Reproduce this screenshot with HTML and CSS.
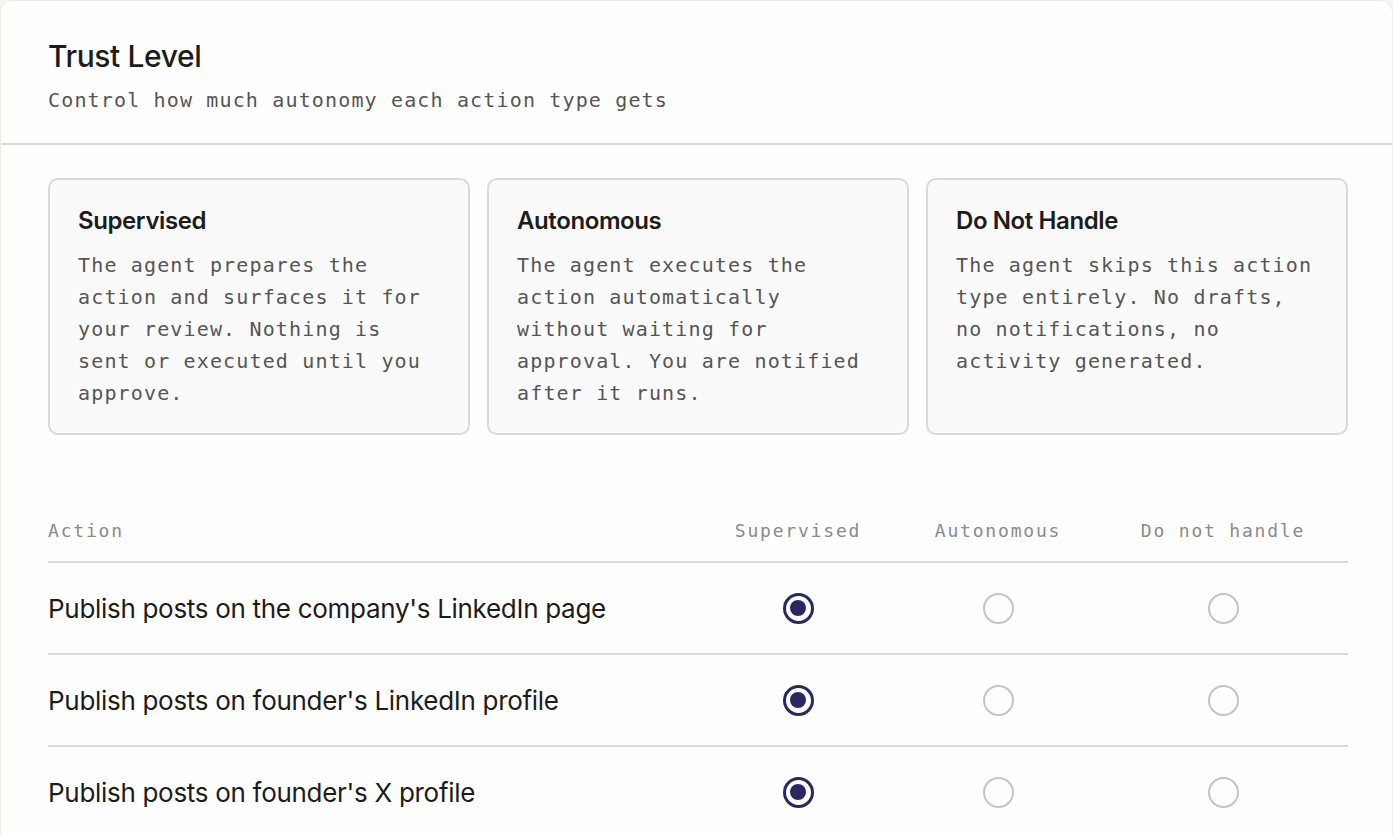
FILE: index.html
```html
<!DOCTYPE html>
<html lang="en">
<head>
    <meta charset="UTF-8">
    <meta name="viewport" content="width=device-width, initial-scale=1.0">
    <title>Trust Level</title>
    <link rel="stylesheet" href="styles.css">
</head>
<body>
    <div class="panel">
        <div class="panel-header">
            <h1 class="title">Trust Level</h1>
            <p class="subtitle">Control how much autonomy each action type gets</p>
        </div>

        <div class="panel-body">
            <div class="levels">
                <div class="level">
                    <h2>Supervised</h2>
                    <p>The agent prepares the action and surfaces it for your review. Nothing is sent or executed until you approve.</p>
                </div>
                <div class="level">
                    <h2>Autonomous</h2>
                    <p>The agent executes the action automatically without waiting for approval. You are notified after it runs.</p>
                </div>
                <div class="level">
                    <h2>Do Not Handle</h2>
                    <p>The agent skips this action type entirely. No drafts, no notifications, no activity generated.</p>
                </div>
            </div>

            <div class="table">
                <div class="row head">
                    <div class="cell action">Action</div>
                    <div class="cell">Supervised</div>
                    <div class="cell">Autonomous</div>
                    <div class="cell">Do not handle</div>
                </div>
                <div class="row">
                    <div class="cell action">Publish posts on the company's LinkedIn page</div>
                    <div class="cell"><span class="radio checked"></span></div>
                    <div class="cell"><span class="radio"></span></div>
                    <div class="cell"><span class="radio"></span></div>
                </div>
                <div class="row">
                    <div class="cell action">Publish posts on founder's LinkedIn profile</div>
                    <div class="cell"><span class="radio checked"></span></div>
                    <div class="cell"><span class="radio"></span></div>
                    <div class="cell"><span class="radio"></span></div>
                </div>
                <div class="row">
                    <div class="cell action">Publish posts on founder's X profile</div>
                    <div class="cell"><span class="radio checked"></span></div>
                    <div class="cell"><span class="radio"></span></div>
                    <div class="cell"><span class="radio"></span></div>
                </div>
            </div>
        </div>
    </div>
</body>
</html>
```

FILE: styles.css
```css
* {
    box-sizing: border-box;
}
body {
    margin: 0;
    background: #f6f5f0;
    font-family: Inter, "Noto Sans", sans-serif;
    color: #1c1c1c;
}
.panel {
    background: #fefefe;
    border: 1px solid #ecebe4;
    border-radius: 12px;
    min-height: 900px;
}
.panel-header {
    padding: 37px 47px 27px;
    border-bottom: 2px solid #dcd9cf;
}
.title {
    margin: 0;
    font-size: 30px;
    line-height: 36px;
    font-weight: 500;
    letter-spacing: -0.4px;
}
.subtitle {
    margin: 10px 0 0;
    font-family: "DejaVu Sans Mono", "Liberation Mono", monospace;
    font-size: 20px;
    line-height: 32px;
    letter-spacing: 1.15px;
    color: #555;
}
.panel-body {
    padding: 33px 44px 0 47px;
}
.levels {
    display: grid;
    grid-template-columns: repeat(3, 1fr);
    gap: 17px;
}
.level {
    background: #fafafa;
    border: 2px solid #dcd9d0;
    border-radius: 10px;
    padding: 26px 28px 24px;
}
.level h2 {
    margin: 0 0 13px;
    font-size: 24px;
    line-height: 30px;
    font-weight: 600;
    letter-spacing: -0.4px;
}
.level p {
    margin: 0;
    font-family: "DejaVu Sans Mono", "Liberation Mono", monospace;
    font-size: 20px;
    line-height: 32px;
    letter-spacing: 1.15px;
    color: #555;
}
.table {
    margin-top: 62px;
}
.row {
    display: grid;
    grid-template-columns: 1fr 200px 200px 250px;
    align-items: center;
    height: 92px;
    border-bottom: 2px solid #dcd9d0;
}
.row.head {
    height: 66px;
    padding-top: 3px;
}
.cell {
    text-align: center;
}
.cell.action {
    text-align: left;
    font-size: 26px;
    letter-spacing: -0.3px;
}
.head .cell {
    font-family: "DejaVu Sans Mono", "Liberation Mono", monospace;
    font-size: 18px;
    letter-spacing: 1.8px;
    color: #8a8a88;
}
.radio {
    display: inline-block;
    vertical-align: middle;
    width: 31px;
    height: 31px;
    border: 2.5px solid #c9c4bb;
    border-radius: 50%;
    position: relative;
}
.radio.checked {
    border: 3px solid #2a2860;
}
.radio.checked::after {
    content: "";
    position: absolute;
    left: 4.5px;
    top: 4.5px;
    width: 16px;
    height: 16px;
    border-radius: 50%;
    background: #2a2860;
}
```
